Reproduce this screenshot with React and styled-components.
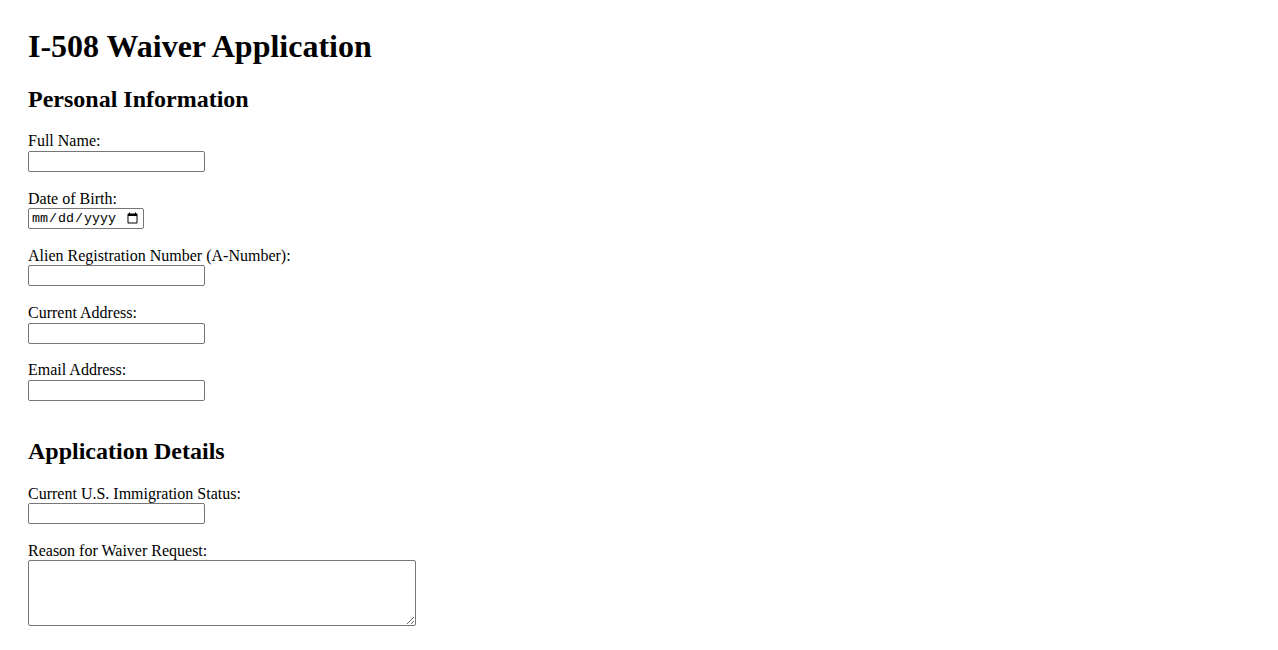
import React from "react";
import styled, { createGlobalStyle } from "styled-components";

const Global = createGlobalStyle`
  html, body { background: #fff; }
  body {
    margin: 8px;
    font-family: "Liberation Serif", "Times New Roman", serif;
    font-size: 16px;
    color: #000;
  }
`;

const Page = styled.div`
  padding: 20px;
`;

const Title = styled.h1`
  font-size: 32px;
  font-weight: bold;
  margin: 0 0 20px;
  line-height: 37px;
`;

const Section = styled.section`
  display: flow-root;
  margin-bottom: 18.6px;
`;

const SectionTitle = styled.h2`
  font-size: 24px;
  font-weight: bold;
  line-height: 28px;
  margin: 0 0 19.3px;
`;

const Field = styled.div`
  display: flex;
  flex-direction: column;
  align-items: flex-start;
  margin-bottom: 17.9px;
`;

const Label = styled.label`
  display: block;
  line-height: 18.4px;
  height: 18.4px;
`;

const TextInput = styled.input`
  box-sizing: border-box;
  width: ${(p) => p.$w || 177}px;
  height: 21px;
  margin: 0;
  padding: 1px 2px;
  border: 1px solid #767676;
  border-radius: 2px;
  font-family: ${(p) => (p.type === "date" ? '"Liberation Mono", monospace' : '"Liberation Sans", Arial, sans-serif')};
  font-size: 13.33px;
  background: #fff;
`;

const TextArea = styled.textarea`
  box-sizing: border-box;
  width: 388px;
  height: 66px;
  margin: 0;
  padding: 2px;
  border: 1px solid #767676;
  border-radius: 2px;
  font-family: "Liberation Mono", monospace;
  font-size: 13.33px;
`;

export default function App() {
  return (
    <>
      <Global />
      <Page>
        <Title>I-508 Waiver Application</Title>
        <Section>
          <SectionTitle>Personal Information</SectionTitle>
          <Field>
            <Label htmlFor="name">Full Name:</Label>
            <TextInput id="name" type="text" />
          </Field>
          <Field>
            <Label htmlFor="dob">Date of Birth:</Label>
            <TextInput id="dob" type="date" $w={116} />
          </Field>
          <Field>
            <Label htmlFor="anum">Alien Registration Number (A-Number):</Label>
            <TextInput id="anum" type="text" />
          </Field>
          <Field>
            <Label htmlFor="addr">Current Address:</Label>
            <TextInput id="addr" type="text" />
          </Field>
          <Field>
            <Label htmlFor="email">Email Address:</Label>
            <TextInput id="email" type="email" />
          </Field>
        </Section>
        <Section>
          <SectionTitle>Application Details</SectionTitle>
          <Field>
            <Label htmlFor="status">Current U.S. Immigration Status:</Label>
            <TextInput id="status" type="text" />
          </Field>
          <Field>
            <Label htmlFor="reason">Reason for Waiver Request:</Label>
            <TextArea id="reason" />
          </Field>
        </Section>
      </Page>
    </>
  );
}
